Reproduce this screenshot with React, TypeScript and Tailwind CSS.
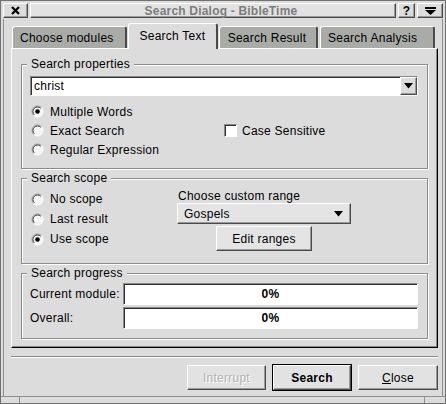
import React from "react";

const raised =
  "border border-t-white border-l-white border-r-[#4a4a4a] border-b-[#4a4a4a] shadow-[inset_-1px_-1px_0_#9a9a9a]";
const sunken =
  "border border-t-[#8a8a8a] border-l-[#8a8a8a] border-r-white border-b-white shadow-[inset_1px_1px_0_#303030]";
const groove =
  "border border-[#8c8c8c] shadow-[inset_1px_1px_0_#ffffff,1px_1px_0_#ffffff]";

function Radio({ checked }: { checked?: boolean }) {
  return (
    <svg width="13" height="13" viewBox="0 0 13 13" className="shrink-0">
      <circle cx="6.5" cy="6.5" r="5.5" fill="#f4f4f4" stroke="#ffffff" strokeWidth="1" />
      <path d="M2.6 10.4 A5.5 5.5 0 0 1 10.4 2.6" fill="none" stroke="#8a8a8a" strokeWidth="1" />
      <path d="M3.3 9.7 A4.5 4.5 0 0 1 9.7 3.3" fill="none" stroke="#3a3a3a" strokeWidth="1" />
      {checked && <circle cx="6.5" cy="6.5" r="2.3" fill="#000" />}
    </svg>
  );
}

function ArrowDown() {
  return (
    <svg width="9" height="6" viewBox="0 0 9 6">
      <path d="M0 0 H9 L4.5 5.5 Z" fill="#000" />
    </svg>
  );
}

function Group({ title, className, children }: { title: string; className?: string; children: React.ReactNode }) {
  return (
    <div className={`relative ${groove} ${className ?? ""}`}>
      <span className="absolute -top-[9px] left-[5px] px-[4px] bg-[#dcdcdc] leading-[16px]">{title}</span>
      {children}
    </div>
  );
}

function RadioRow({ label, checked, h }: { label: string; checked?: boolean; h: string }) {
  return (
    <div className={`flex items-center gap-[6px] pl-[1px] ${h}`}>
      <Radio checked={checked} />
      <span>{label}</span>
    </div>
  );
}

function Tab({ label, w, pl }: { label: string; w: string; pl: string }) {
  return (
    <div className={`h-[22px] ${w} ${pl} bg-[#a9aca6] border-t border-l border-white border-r-2 border-r-[#4a4a4a] rounded-t-[3px] flex items-center`}>
      {label}
    </div>
  );
}

export default function App() {
  return (
    <div className="w-[446px] h-[404px] bg-[#dcdcdc] border border-[#707070] flex flex-col font-['Liberation_Sans',Arial,sans-serif] text-[12px] tracking-[0.25px] text-black overflow-hidden">
      {/* title bar */}
      <div className="h-[15px] mt-[2px] px-[2px] flex items-stretch gap-[2px] tracking-normal">
        <div className={`w-[25px] ${raised} flex items-center justify-center`}>
          <svg width="9" height="9" viewBox="0 0 9 9">
            <path d="M1 1 L8 8 M8 1 L1 8" stroke="#000" strokeWidth="2.2" />
          </svg>
        </div>
        <div className={`flex-1 ${raised} bg-[#e2e2e2] flex items-center justify-center pl-[16px] font-bold text-[#7c7c7c] leading-none tracking-[0.2px]`}>
          Search Dialog - BibleTime
        </div>
        <div className={`w-[17px] ${raised} flex items-center justify-center font-bold leading-none`}>?</div>
        <div className={`w-[26px] ${raised} flex items-center justify-center`}>
          <svg width="11" height="8" viewBox="0 0 11 8">
            <rect x="0" y="0" width="11" height="2" fill="#000" />
            <path d="M0 3 H11 L5.5 8 Z" fill="#000" />
          </svg>
        </div>
      </div>

      {/* client */}
      <div className="flex-1 mx-[2px] mt-[1px] border-l border-r border-[#909090] flex flex-col px-[7px] pt-[4px]">
        {/* tabs */}
        <div className="h-[25px] flex items-end pl-[1px]">
          <Tab label="Choose modules" w="w-[116px]" pl="pl-[7px]" />
          <div className="relative z-10 -mb-[1px] h-[26px] w-[90px] ml-[1px] mr-[1px] bg-[#dcdcdc] border-t border-l border-white border-r-2 border-r-[#4a4a4a] rounded-t-[3px] flex items-start justify-center pt-[3px]">
            Search Text
          </div>
          <Tab label="Search Result" w="w-[100px]" pl="pl-[8px]" />
          <div className="ml-[2px]">
            <Tab label="Search Analysis" w="w-[115px]" pl="pl-[7px]" />
          </div>
        </div>

        {/* panel */}
        <div className="h-[300px] w-[427px] border border-t-white border-l-white border-r-black border-b-black shadow-[inset_-1px_-1px_0_#8a8a8a] pt-[15px] pl-[9px] pr-[9px] flex flex-col gap-[9px]">
          <Group title="Search properties" className="h-[105px] pt-[11px] pl-[8px] pr-[9px]">
            <div className={`h-[20px] bg-white ${sunken} flex items-center`}>
              <span className="flex-1 pl-[3px]">christ</span>
              <div className={`w-[17px] h-full bg-[#dcdcdc] ${raised} flex items-center justify-center`}>
                <ArrowDown />
              </div>
            </div>
            <div className="flex mt-[6px]">
              <div className="w-[194px]">
                <RadioRow label="Multiple Words" checked h="h-[19px]" />
                <RadioRow label="Exact Search" h="h-[19px]" />
                <RadioRow label="Regular Expression" h="h-[19px]" />
              </div>
              <div className="pt-[19px]">
                <div className="h-[19px] flex items-center gap-[5px]">
                  <div className={`w-[13px] h-[13px] bg-white ${sunken}`} />
                  <span>Case Sensitive</span>
                </div>
              </div>
            </div>
          </Group>

          <Group title="Search scope" className="h-[86px] pt-[10px] pl-[8px] flex">
            <div className="w-[147px]">
              <RadioRow label="No scope" h="h-[20px]" />
              <RadioRow label="Last result" h="h-[20px]" />
              <RadioRow label="Use scope" checked h="h-[20px]" />
            </div>
            <div className="w-[174px] flex flex-col items-center">
              <div className="self-start leading-[14px] pl-[1px]">Choose custom range</div>
              <div className={`w-[174px] h-[21px] ${raised} bg-[#e4e4e4] flex items-center justify-between pl-[6px] pr-[7px]`}>
                <span>Gospels</span>
                <ArrowDown />
              </div>
              <div className={`mt-[2px] w-[96px] h-[25px] ${raised} bg-[#e4e4e4] flex items-center justify-center`}>
                Edit ranges
              </div>
            </div>
          </Group>

          <Group title="Search progress" className="h-[66px] pt-[9px] pl-[8px] pr-[9px] flex flex-col gap-[2px]">
            <div className="flex items-center">
              <span className="w-[93px]">Current module:</span>
              <div className={`flex-1 h-[22px] bg-white ${sunken} flex items-center justify-center font-bold`}>0%</div>
            </div>
            <div className="flex items-center">
              <span className="w-[93px]">Overall:</span>
              <div className={`flex-1 h-[22px] bg-white ${sunken} flex items-center justify-center font-bold`}>0%</div>
            </div>
          </Group>
        </div>

        {/* separator */}
        <div className="mt-[8px] w-[427px] border-t border-[#8a8a8a] border-b border-b-white" />

        {/* buttons */}
        <div className="mt-[6px] w-[427px] flex justify-end items-center gap-[6px]">
          <div className={`w-[79px] h-[25px] ${raised} bg-[#e2e2e2] flex items-center justify-center text-[#b4b4b4] [text-shadow:1px_1px_0_#ffffff]`}>
            Interrupt
          </div>
          <div className="border border-black">
            <div className={`w-[78px] h-[25px] ${raised} bg-[#e2e2e2] flex items-center justify-center font-bold`}>
              Search
            </div>
          </div>
          <div className={`w-[80px] h-[25px] ${raised} bg-[#e2e2e2] flex items-center justify-center`}>
            <span>
              <span className="underline">C</span>lose
            </span>
          </div>
        </div>
      </div>

      {/* bottom frame */}
      <div className="h-[7px] border-t border-[#909090] flex">
        <div className="w-[19px] border-r border-[#909090]" />
        <div className="flex-1 border-r border-[#909090]" />
        <div className="w-[20px]" />
      </div>
    </div>
  );
}
